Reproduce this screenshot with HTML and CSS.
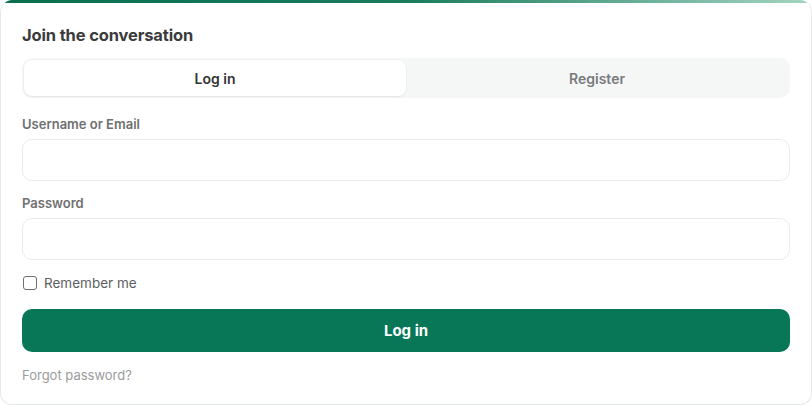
FILE: index.html
```html
<!DOCTYPE html>
<html lang="en">
<head>
<meta charset="utf-8">
<title>Join the conversation</title>
<link rel="stylesheet" href="styles.css">
</head>
<body>
<div class="card">
  <h2 class="title">Join the conversation</h2>
  <div class="tabs">
    <button class="tab active" type="button">Log in</button>
    <button class="tab" type="button">Register</button>
  </div>
  <form class="form">
    <label class="label" for="user">Username or Email</label>
    <input class="input" id="user" type="text">
    <label class="label" for="pass">Password</label>
    <input class="input" id="pass" type="password">
    <label class="remember"><span class="box"></span>Remember me</label>
    <button class="submit" type="button">Log in</button>
    <a class="forgot" href="#">Forgot password?</a>
  </form>
</div>
</body>
</html>
```
FILE: styles.css
```css
* { box-sizing: border-box; }
html, body { margin: 0; padding: 0; background: #ffffff; }
body { font-family: Inter, "Noto Sans", "Liberation Sans", sans-serif; }

.card {
  width: 812px;
  height: 405px;
  border: 1px solid #e6e8e8;
  border-top: 0;
  border-radius: 12px;
  overflow: hidden;
  position: relative;
  padding: 23px 21px 20px 21px;
  display: flex;
  flex-direction: column;
}
.card::before {
  content: "";
  position: absolute;
  left: 0; right: 0; top: 0;
  height: 3px;
  background: linear-gradient(90deg, #0a6e4f 0%, #1a7b5d 50%, #a4d5c1 100%);
}

.title {
  margin: 0;
  font-size: 16.5px;
  line-height: 24px;
  font-weight: 700;
  color: #3a3b3c;
  letter-spacing: -0.15px;
}

.tabs {
  margin-top: 11px;
  display: flex;
  padding: 2px;
  background: #f5f6f6;
  border-radius: 10px;
  height: 40px;
}
.tab {
  flex: 1;
  border: 0;
  background: transparent;
  font-family: inherit;
  font-size: 14px;
  font-weight: 600;
  color: #7a7b7c;
  border-radius: 8px;
  padding: 0;
}
.tab.active {
  background: #ffffff;
  color: #333435;
  box-shadow: 0 1px 2px rgba(0,0,0,0.06), 0 0 0 1px rgba(0,0,0,0.015);
}

.form { display: flex; flex-direction: column; }
.label {
  margin-top: 17px;
  font-size: 13px;
  line-height: 18px;
  font-weight: 600;
  color: #6f7071;
}
.label + .input { margin-top: 6px; }
.input + .label { margin-top: 13px; }
.input {
  height: 42px;
  border: 1px solid #eaebeb;
  border-radius: 10px;
  background: #fff;
  font-family: inherit;
  font-size: 14px;
  padding: 0 12px;
  outline: none;
}

.remember {
  margin-top: 13px;
  display: flex;
  align-items: center;
  gap: 7px;
  font-size: 13.5px;
  line-height: 20px;
  color: #5d5e5f;
}
.box {
  width: 14px;
  height: 14px;
  border: 1px solid #6d6e6f;
  border-radius: 3px;
  margin-left: 1px;
}

.submit {
  margin-top: 16px;
  height: 43px;
  border: 0;
  border-radius: 10px;
  background: #077757;
  color: #ffffff;
  font-family: inherit;
  font-size: 15px;
  font-weight: 700;
}

.forgot {
  margin-top: 14px;
  font-size: 13px;
  line-height: 18px;
  color: #9a9b9c;
  text-decoration: none;
}
```
